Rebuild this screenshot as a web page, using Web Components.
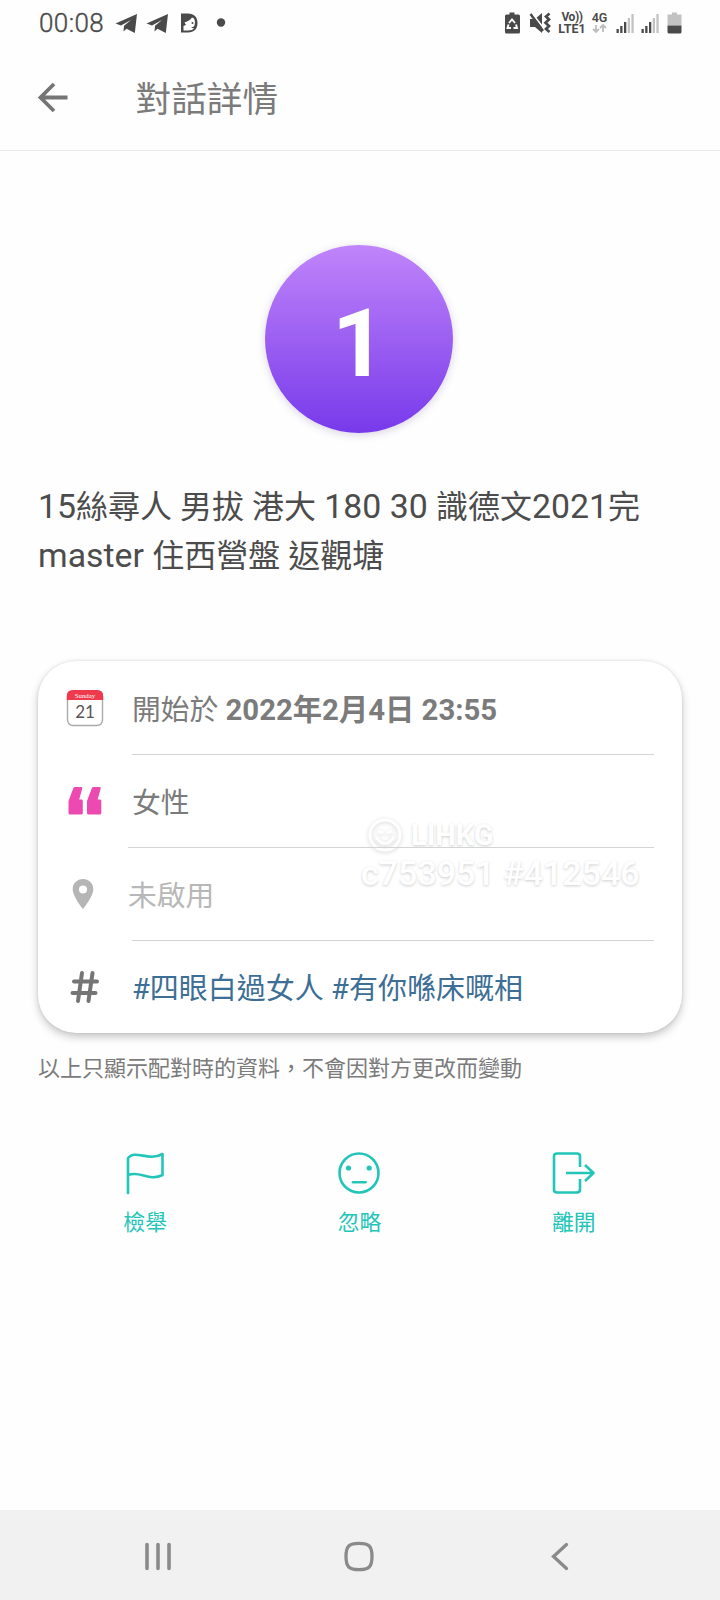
<!DOCTYPE html>
<html lang="zh-Hant">
<head>
<meta charset="utf-8">
<title>對話詳情</title>
<style>
html,body{margin:0;padding:0;background:#fefefe}
body{font-family:Roboto,"Noto Sans CJK TC",sans-serif;width:720px;height:1600px;overflow:hidden}
</style>
</head>
<body>
<chat-detail-page></chat-detail-page>
<script>
const define = (name, html) => {
  const t = document.createElement('template');
  t.innerHTML = html;
  customElements.define(name, class extends HTMLElement {
    constructor() {
      super();
      this.attachShadow({ mode: 'open' }).appendChild(t.content.cloneNode(true));
    }
  });
};

define('status-bar', `
<style>
:host{display:flex;height:46px;box-sizing:border-box;padding:0 35px 0 39px;align-items:center;color:#4a4a4a}
.time{font-size:26px;line-height:46px;font-weight:300;-webkit-text-stroke:.4px #4a4a4a;width:76px;letter-spacing:.4px;white-space:nowrap}
svg{display:block;flex:none}
.sp{flex:1}
.net{display:grid;grid-template-rows:11px 11px;font-weight:700;font-size:12px;line-height:11px;text-align:center;flex:none}
.g{font-size:12.500px;font-weight:600}
</style>
<span class="time">00:08</span>
<svg width="120" height="22" viewBox="0 0 120 22" fill="#4a4a4a">
  <path d="M.5 11.500 22 2 19.800 21 11.500 16.800 8.500 19.500 9 13.800 16 8 6 13.400Z"/>
  <path d="M31.500 11.500 53 2 50.800 21 42.500 16.800 39.500 19.500 40 13.800 47 8 37 13.400Z"/>
  <path fill-rule="evenodd" d="M66 1.500H73C79 1.500 82.500 5 82.500 11S79 20.500 73 20.500H66ZM68.500 18.500H73C76 18.500 78 17.700 79 16.500L76 15.500 79 14.500C80.300 12 80.300 9 79 6.500L77 5.500C75 8.500 72 9.500 69.500 10.500L71 13 68.500 14Z"/>
  <circle cx="77.500" cy="11" r="1"/>
  <circle cx="106" cy="10.500" r="4.200"/>
</svg>
<span class="sp"></span>
<svg width="50" height="24" viewBox="0 0 50 24" fill="#4a4a4a">
  <path d="M6.500 1.500h5v2h4q1.500 0 1.500 1.500v16q0 1.500-1.500 1.500h-12q-1.500 0-1.500-1.500V5q0-1.500 1.500-1.500h3Z"/>
  <path d="M6 12 9 8.500 12 12M13 13.500 14 17H10.500M8 17H4.500L5.500 13.500" fill="none" stroke="#fff" stroke-width="1.900"/>
  <path d="M27 8h5l7-6v20l-7-6h-5Z"/><path d="M28 1 42 19" stroke="#fff" stroke-width="2"/><path d="M27.500 3 40 20" stroke="#4a4a4a" stroke-width="2.500"/>
  <path d="M46.500 2.500 43 5.500l3 3-3.500 3.300 3.500 3.200-3 3 3.500 3" fill="none" stroke="#4a4a4a" stroke-width="2.700"/>
</svg>
<span class="net" style="margin:0 0 0 3px;width:32px"><span style="letter-spacing:-.4px">Vo))</span><span style="font-size:12.500px">LTE1</span></span>
<span class="net g" style="margin:0 0 0 2px;width:19px"><span>4G</span>
 <svg width="19" height="11" viewBox="0 0 19 11" fill="none" stroke="#bdbdbd" stroke-width="1.800"><path d="M6 2v7M3 6l3 3 3-3M13 9V2M10 5l3-3 3 3"/></svg></span>
<svg style="margin-left:6px" width="70" height="24" viewBox="0 0 70 24">
  <g fill="#4a4a4a"><path d="M1.500 18h2.300v4H1.500ZM5.200 15h2.300v7H5.200ZM9 11h2.300v11H9Z"/><path d="M26.500 18h2.300v4h-2.300ZM30.200 15h2.300v7h-2.300ZM34 11h2.300v11H34Z"/></g>
  <g fill="#c2c2c2"><path d="M12.700 7h2.300v15h-2.300ZM16.400 3h2.300v19h-2.300Z"/><path d="M37.700 7H40v15h-2.300ZM41.400 3h2.300v19h-2.300Z"/></g>
  <path fill="#c2c2c2" d="M57 1.500h5v2h4.500V14.500h-14v-11H57Z"/><path fill="#4a4a4a" d="M52.500 14.500h14V21q0 1.500-1.500 1.500h-11q-1.500 0-1.500-1.500Z"/>
</svg>`);

define('app-header', `
<style>
:host{display:flex;align-items:center;height:105px;box-sizing:border-box;border-bottom:1px solid #e8e8e8;padding:0 36px}
svg{display:block;flex:none;margin-top:-2px}
.t{margin:3px 0 0 66.500px;font-size:35.700px;line-height:52px;color:#7b7b7b}
</style>
<svg width="33" height="34" viewBox="0 0 33 34" fill="none" stroke="#757575" stroke-width="3.800"><path d="M31.500 17.500H5M18 4 4.500 17.500 18 31"/></svg>
<span class="t"><slot></slot></span>`);

define('user-avatar', `
<style>
:host{display:flex;align-items:center;justify-content:center;width:188px;height:188px;border-radius:50%;background:linear-gradient(#c085fa,#783aea);box-shadow:0 2px 9px rgba(70,40,110,.2);color:#fff;font-size:94px;font-weight:700;line-height:188px}
span{transform:translate(0,5px)}
</style><span><slot></slot></span>`);

define('info-row', `
<style>
:host{display:flex;height:93px;box-sizing:border-box;--ind:94px}
.i{width:var(--ind);display:flex;align-items:center;box-sizing:border-box;padding:0 0 2px 27px;flex:none}
.c{flex:1;display:flex;align-items:center;margin-right:28px;border-bottom:1px solid #d4d4d4;font-size:28.800px;line-height:40px;color:#7b7b7b;white-space:nowrap;padding-top:3px;box-sizing:border-box}
:host([last]) .c{border-bottom-color:transparent}
:host([narrow]){--ind:90px}
:host([muted]) .c{color:#b8b8b8}
:host([link]) .c{color:#3d6e96;font-size:29px}
.c>div{white-space:pre}
</style>
<div class="i"><slot name="icon"></slot></div><div class="c"><div><slot></slot></div></div>`);

define('info-card', `
<style>
:host{display:block;position:relative;isolation:isolate;box-sizing:border-box;height:372px;border-radius:38px;background:#fff;padding-top:1px;box-shadow:0 4px 9px rgba(0,0,0,.22),0 0 3px rgba(0,0,0,.1)}
</style><slot></slot>`);

define('action-button', `
<style>
:host{display:flex;flex-direction:column;align-items:center;flex:1;color:#22c5b8;font-size:21.800px;line-height:30px}
span{margin-top:13px}
</style><slot name="icon"></slot><span><slot></slot></span>`);

define('water-mark', `
<style>
:host{display:grid;color:#fff;font-weight:500;text-shadow:0 1px 3px rgba(0,0,0,.2);white-space:nowrap}
.a{display:flex;align-items:center;gap:8px;font-size:29px;line-height:36px;height:38px;padding-left:6px;font-weight:700}
.b{font-size:34px;line-height:38px}
svg{display:block;filter:drop-shadow(0 1px 2px rgba(0,0,0,.17))}
</style>
<div class="a"><svg width="36" height="36" viewBox="0 0 36 36" fill="none" stroke="#fff" stroke-width="3"><circle cx="18" cy="18" r="15"/><path d="M9 20q9 13 18 0M11 14l5 2M25 14l-5 2"/></svg><span>LIHKG</span></div>
<div class="b">c753951 #412546</div>`);

define('nav-bar', `
<style>
:host{display:grid;grid-template-columns:315px 87px 316px;height:90px;background:#f1f1f1;align-items:center;padding-top:2px;box-sizing:border-box}
div{display:flex;justify-content:center}
svg{display:block}
</style>
<div><svg width="30" height="32" viewBox="0 0 30 32" stroke="#8a8a8a" stroke-width="3.600" stroke-linecap="round"><path d="M4 4.500v24M15 4.500v24M26 4.500v24"/></svg></div>
<div><svg width="32" height="32" viewBox="0 0 32 32" fill="none" stroke="#8a8a8a" stroke-width="3.300"><path d="M16 3.300C26 3.300 29 6 29 16.500S26 29.700 16 29.700 3 27 3 16.500 6 3.300 16 3.300Z"/></svg></div>
<div><svg width="20" height="32" viewBox="0 0 20 32" fill="none" stroke="#8a8a8a" stroke-width="3.300" stroke-linecap="round"><path d="M16.500 4.500 3.500 16.500l13 12"/></svg></div>`);

define('chat-detail-page', `
<style>
:host{display:flex;flex-direction:column;width:720px;height:1600px;position:relative}
main{flex:1;display:flex;flex-direction:column;padding:94px 38px 0}
user-avatar{margin-left:227px}
h1{margin:50px 0 0;height:98px;font-weight:400;font-size:32px;line-height:49px;color:#4c4c4c;white-space:nowrap}
h1 span{font-size:33.800px;line-height:1}
info-card{margin-top:80px;flex:none}
.note{margin:20px 0 0;font-size:22px;line-height:32px;color:#7b7b7b;white-space:nowrap}
.acts{display:flex;margin-top:66px;margin-right:1px}
svg{display:block}
b{font-weight:700;font-size:29.300px}
water-mark{position:absolute;z-index:-1;left:323px;top:155px}
</style>
<status-bar></status-bar>
<app-header>對話詳情</app-header>
<main>
<user-avatar>1</user-avatar>
<h1><span>15</span>絲尋人 男拔 港大<span> 180 30 </span>識德文<span>2021</span>完<br><span>master </span>住西營盤 返觀塘</h1>
<info-card>
<info-row><svg slot="icon" width="40" height="38" viewBox="0 0 40 38"><rect x="2.500" y="2" width="35" height="34.500" rx="5.500" fill="#fff" stroke="#aaa" stroke-width="1.400"/><path d="M1.800 11V7q0-6 6-6H32.200q6 0 6 6v4Z" fill="#ef3a4e"/><text x="20" y="8.600" text-anchor="middle" font-family="Liberation Serif,serif" font-size="6.800" fill="#fff">Sunday</text><text x="20" y="29" text-anchor="middle" font-family="Lato,sans-serif" font-size="17" fill="#555">21</text></svg>開始於 <b>2022年2月4日 23:55</b></info-row>
<info-row narrow><svg slot="icon" width="40" height="30" viewBox="0 0 40 30" fill="#ec4ab0"><path d="M8.300 2.200Q8.800 1 10 1H16.200Q17.600 1 17.200 2.400L14.200 13.500H16.500Q17.800 13.500 17.800 14.800V27Q17.800 28.500 16.300 28.500H5Q3.500 28.500 3.500 27V15Z"/><path transform="translate(18.500)" d="M8.300 2.200Q8.800 1 10 1H16.200Q17.600 1 17.200 2.400L14.200 13.500H16.500Q17.800 13.500 17.800 14.800V27Q17.800 28.500 16.300 28.500H5Q3.500 28.500 3.500 27V15Z"/></svg><span style="margin-left:4px">女性</span></info-row>
<info-row muted><svg slot="icon" width="36" height="34" viewBox="0 0 36 34"><path fill="#b5b5b5" fill-rule="evenodd" d="M18 2C12 2 7.700 6.300 7.700 12.200 7.700 19.500 18 32 18 32S28.300 19.500 28.300 12.200C28.300 6.300 24 2 18 2ZM18 8.500a4 4 0 1 1 0 8 4 4 0 0 1 0-8Z"/></svg><span style="margin-left:-4px">未啟用</span></info-row>
<info-row last link><svg slot="icon" width="40" height="36" viewBox="0 0 40 36" fill="none" stroke="#757575" stroke-width="4" stroke-linecap="round"><path d="M17 4 13 32M27.500 4 23.500 32M9 12.500H32M7.500 24H30.500"/></svg>#四眼白過女人 #有你喺床嘅相</info-row>
<water-mark></water-mark>
</info-card>
<p class="note">以上只顯示配對時的資料，不會因對方更改而變動</p>
<div class="acts">
<action-button><svg slot="icon" width="44" height="44" viewBox="0 0 44 44" fill="none" stroke="#22c5b8" stroke-width="2.600" stroke-linecap="round" stroke-linejoin="round"><path d="M5 42V7C13 -2 25 11 39.500 3V24C26 31 17 19 5 24"/></svg>檢舉</action-button>
<action-button><svg slot="icon" width="44" height="44" viewBox="0 0 44 44" fill="none" stroke="#22c5b8" stroke-width="2.600"><circle cx="22" cy="22" r="19.500"/><path d="M16 31.200h12.500" stroke-linecap="round"/><g fill="#22c5b8" stroke="none"><circle cx="11.500" cy="17" r="2.600"/><circle cx="32.200" cy="17" r="2.600"/></g></svg>忽略</action-button>
<action-button><svg slot="icon" width="44" height="44" viewBox="0 0 44 44" fill="none" stroke="#22c5b8" stroke-width="2.600" stroke-linejoin="round"><path d="M28 16V5.500Q28 2.500 25 2.500H5Q2 2.500 2 5.500V38.500Q2 41.500 5 41.500H25Q28 41.500 28 38.500V28"/><path d="M14 22H41.500M33 14l8.500 8-8.500 8"/></svg>離開</action-button>
</div>
</main>
<nav-bar></nav-bar>`);
</script>
</body>
</html>
